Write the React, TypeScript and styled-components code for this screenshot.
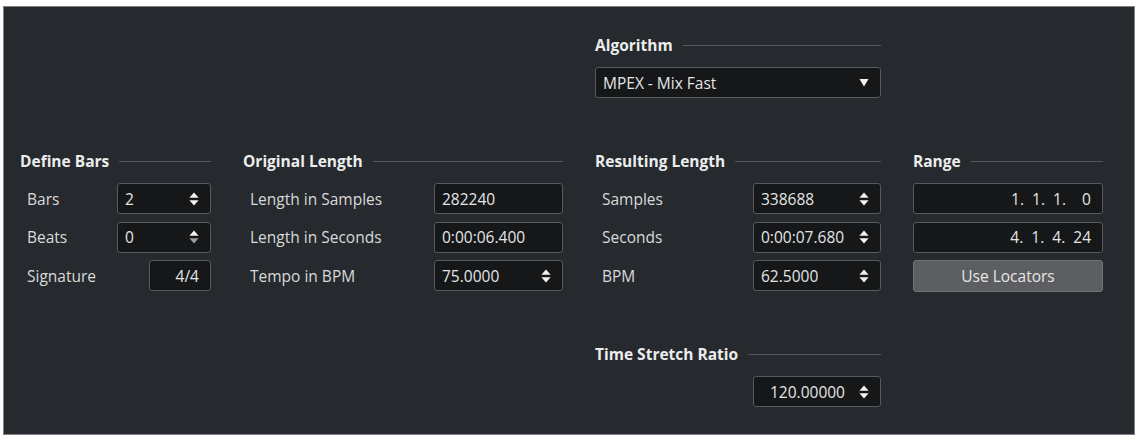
import React from 'react';
import styled, { createGlobalStyle } from 'styled-components';

const GlobalStyle = createGlobalStyle`
  html, body {
    margin: 0;
    background: #ffffff;
  }
  body {
    font-family: 'Open Sans', 'Noto Sans', sans-serif;
  }
`;

const Frame = styled.div`
  padding: 6px 2px 2px 3px;
`;

const Panel = styled.div`
  box-sizing: border-box;
  width: 1132px;
  height: 429px;
  background: #26292d;
  border: 1px solid #7e8083;
  padding: 27px 0 0 16px;
  display: flex;
  flex-direction: column;
  color: #d9dadb;
  font-size: 15.5px;
`;

const Columns = styled.div<{ $top?: number }>`
  display: grid;
  grid-template-columns: 191px 320px 286px 190px;
  column-gap: 32px;
  margin-top: ${(p) => p.$top ?? 0}px;
`;

const Group = styled.div<{ $col?: number }>`
  grid-column: ${(p) => p.$col ?? 'auto'};
  display: flex;
  flex-direction: column;
`;

const Header = styled.div`
  height: 22px;
  display: flex;
  align-items: center;
  margin-bottom: 11px;
`;

const HeaderTitle = styled.span`
  font-weight: 700;
  color: #eceded;
  white-space: nowrap;
`;

const HeaderLine = styled.div`
  flex: 1;
  height: 1px;
  background: #54575b;
  margin-left: 10px;
`;

const Rows = styled.div`
  display: flex;
  flex-direction: column;
  gap: 7.5px;
`;

const Row = styled.div`
  display: flex;
  align-items: center;
  justify-content: space-between;
  height: 31px;
`;

const Label = styled.span`
  padding-left: 7px;
  white-space: nowrap;
`;

const Field = styled.div<{ $w?: number; $align?: 'left' | 'right'; $pad?: number }>`
  box-sizing: border-box;
  width: ${(p) => (p.$w ? `${p.$w}px` : '100%')};
  height: 31px;
  background: #151719;
  border: 1px solid #56595e;
  border-radius: 3px;
  display: flex;
  align-items: center;
  justify-content: ${(p) => (p.$align === 'right' ? 'flex-end' : 'space-between')};
  padding: 0 11px 0 ${(p) => p.$pad ?? 7}px;
  color: #e4e5e6;
  white-space: pre;
`;

const Button = styled.button`
  box-sizing: border-box;
  width: 100%;
  height: 32px;
  background: #5c5e62;
  border: 1px solid #717377;
  border-radius: 3px;
  color: #e6e6e6;
  font: inherit;
`;

const RightRow = styled(Row)`
  justify-content: flex-end;
`;

function Spinner({ downDim }: { downDim?: boolean }) {
  return (
    <svg width="10" height="14" viewBox="0 0 10 14">
      <path d="M5 0.5 L9.6 5.8 L0.4 5.8 Z" fill="#f2f2f2" />
      <path d="M5 13.5 L9.6 8.2 L0.4 8.2 Z" fill={downDim ? '#9a9b9d' : '#f2f2f2'} />
    </svg>
  );
}

function Caret() {
  return (
    <svg width="10" height="9" viewBox="0 0 10 9">
      <path d="M0.5 1 L9.5 1 L5 8.5 Z" fill="#f2f2f2" />
    </svg>
  );
}

function GroupHeader({ title }: { title: string }) {
  return (
    <Header>
      <HeaderTitle>{title}</HeaderTitle>
      <HeaderLine />
    </Header>
  );
}

export default function App() {
  return (
    <Frame>
      <GlobalStyle />
      <Panel>
        {/* Algorithm */}
        <Columns>
          <Group $col={3}>
            <GroupHeader title="Algorithm" />
            <Field>
              <span>MPEX - Mix Fast</span>
              <Caret />
            </Field>
          </Group>
        </Columns>

        {/* Main sections */}
        <Columns $top={52}>
          <Group>
            <GroupHeader title="Define Bars" />
            <Rows>
              <Row>
                <Label>Bars</Label>
                <Field $w={94}>
                  <span>2</span>
                  <Spinner />
                </Field>
              </Row>
              <Row>
                <Label>Beats</Label>
                <Field $w={94}>
                  <span>0</span>
                  <Spinner downDim />
                </Field>
              </Row>
              <Row>
                <Label>Signature</Label>
                <Field $w={62} $align="right">
                  <span>4/4</span>
                </Field>
              </Row>
            </Rows>
          </Group>

          <Group>
            <GroupHeader title="Original Length" />
            <Rows>
              <Row>
                <Label>Length in Samples</Label>
                <Field $w={129}>
                  <span>282240</span>
                </Field>
              </Row>
              <Row>
                <Label>Length in Seconds</Label>
                <Field $w={129}>
                  <span>0:00:06.400</span>
                </Field>
              </Row>
              <Row>
                <Label>Tempo in BPM</Label>
                <Field $w={129}>
                  <span>75.0000</span>
                  <Spinner />
                </Field>
              </Row>
            </Rows>
          </Group>

          <Group>
            <GroupHeader title="Resulting Length" />
            <Rows>
              <Row>
                <Label>Samples</Label>
                <Field $w={128}>
                  <span>338688</span>
                  <Spinner />
                </Field>
              </Row>
              <Row>
                <Label>Seconds</Label>
                <Field $w={128}>
                  <span>0:00:07.680</span>
                  <Spinner />
                </Field>
              </Row>
              <Row>
                <Label>BPM</Label>
                <Field $w={128}>
                  <span>62.5000</span>
                  <Spinner />
                </Field>
              </Row>
            </Rows>
          </Group>

          <Group>
            <GroupHeader title="Range" />
            <Rows>
              <Field $align="right">
                <span>{'1.  1.  1.    0'}</span>
              </Field>
              <Field $align="right">
                <span>{'4.  1.  4.  24'}</span>
              </Field>
              <Button>Use Locators</Button>
            </Rows>
          </Group>
        </Columns>

        {/* Time Stretch Ratio */}
        <Columns $top={51}>
          <Group $col={3}>
            <GroupHeader title="Time Stretch Ratio" />
            <RightRow>
              <Field $w={128} $pad={16}>
                <span>120.00000</span>
                <Spinner />
              </Field>
            </RightRow>
          </Group>
        </Columns>
      </Panel>
    </Frame>
  );
}
